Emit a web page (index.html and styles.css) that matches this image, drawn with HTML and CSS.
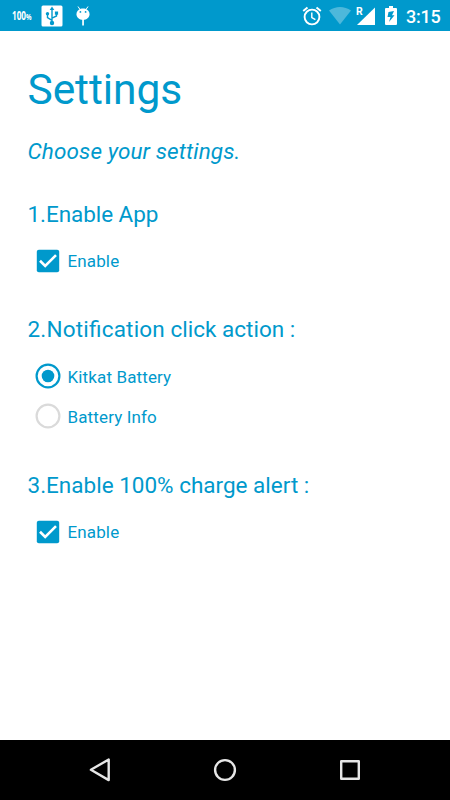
FILE: index.html
```html
<!DOCTYPE html>
<html lang="en">
<head>
<meta charset="utf-8">
<title>Settings</title>
<link rel="stylesheet" href="styles.css">
</head>
<body>
<div class="screen">
  <header class="status">
    <span class="percent">100<small>%</small></span>
    <svg class="usb" width="22" height="22" viewBox="0 0 22 22">
      <rect x=".5" y=".5" width="21" height="21" rx="1.5" fill="#fff"/>
      <g fill="none" stroke="#0099cc" stroke-width="1.4"><path d="M11 18V4M11 15.3L6.500 12.600V9M11 13.200L15.500 11V8"/></g>
      <g fill="#0099cc"><path d="M11 1.500L13.300 5H8.700z"/><circle cx="11" cy="18" r="2.200"/><circle cx="6.500" cy="8.700" r="1.700"/><path d="M13.900 6.500h3.200v3.200h-3.200z"/></g>
    </svg>
    <svg class="droid" width="14" height="22" viewBox="0 0 14 22">
      <path d="M2 1.500L4 4.500M12 1.500L10 4.500" stroke="#fff"/>
      <path d="M.5 9.200C.5 1.700 13.500 1.700 13.500 9.200 13.500 12.500 10.500 14.800 7 14.800S.5 12.500 .5 9.200z" fill="#fff"/>
      <path d="M6.200 14h1.700v6.500H6.200z" fill="#fff"/>
      <circle cx="4.400" cy="6.900" r=".9" fill="#0099cc"/><circle cx="9.600" cy="6.900" r=".9" fill="#0099cc"/>
    </svg>
    <span class="spacer"></span>
    <svg class="alarm" width="20" height="20" viewBox="0 0 20 20" fill="none" stroke="#fff" stroke-width="1.900">
      <circle cx="10" cy="11" r="7.400"/><path d="M1.200 5L5.500 1.400M18.800 5L14.500 1.400"/><path d="M9.800 6.500v5l3.600 2.200" stroke-width="1.400"/>
    </svg>
    <svg class="wifi" width="22" height="18" viewBox="0 0 22 18"><path d="M0 3.600C6.500-1.200 15.500-1.200 22 3.600L11 17.500z" fill="#4db8db"/></svg>
    <svg class="signal" width="20" height="20" viewBox="0 0 20 20"><path d="M19 1.500V19H1z" fill="#fff"/><path d="M0 0h6v9H0z" fill="#0099cc"/><text x="0" y="9" class="roaming">R</text></svg>
    <svg class="battery" width="12" height="19" viewBox="0 0 12 19"><path d="M4 0h4v2h3q1 0 1 1v15q0 1-1 1H1q-1 0-1-1V3q0-1 1-1h3z" fill="#fff"/><path d="M9 5L3.500 6 2.500 11h3L4 16 9.500 9.300H7z" fill="#0099cc"/></svg>
    <span class="clock">3:15</span>
  </header>

  <main class="content">
    <h1>Settings</h1>
    <p class="intro">Choose your settings.</p>

    <section>
      <h2 class="h-app">1.Enable App</h2>
      <div class="option">
        <svg class="control" width="26" height="26" viewBox="0 0 26 26"><rect x="1.800" y="1.800" width="22.400" height="22.400" rx="2" fill="#0099cc"/><path d="M5 12.800l5.200 5.100L21 7.100" fill="none" stroke="#fff" stroke-width="2.600"/></svg>
        <span>Enable</span>
      </div>
    </section>

    <section>
      <h2 class="h-click"><span>2.Notification</span> click action :</h2>
      <div class="option">
        <svg class="control" width="26" height="26" viewBox="0 0 26 26"><circle cx="13" cy="13" r="11.400" fill="none" stroke="#0099cc" stroke-width="2.200"/><circle cx="13" cy="13" r="6.300" fill="#0099cc"/></svg>
        <span>Kitkat Battery</span>
      </div>
      <div class="option">
        <svg class="control" width="26" height="26" viewBox="0 0 26 26"><circle cx="13" cy="13" r="11.400" fill="none" stroke="#dadada" stroke-width="2.200"/></svg>
        <span>Battery Info</span>
      </div>
    </section>

    <section>
      <h2 class="h-alert">3.Enable 100% charge alert :</h2>
      <div class="option">
        <svg class="control" width="26" height="26" viewBox="0 0 26 26"><rect x="1.800" y="1.800" width="22.400" height="22.400" rx="2" fill="#0099cc"/><path d="M5 12.800l5.200 5.100L21 7.100" fill="none" stroke="#fff" stroke-width="2.600"/></svg>
        <span>Enable</span>
      </div>
    </section>
  </main>

  <nav class="nav">
    <svg width="24" height="26" viewBox="0 0 24 26"><path d="M20.700 2.500v20.600L2.900 12.800z"/></svg>
    <svg width="24" height="24" viewBox="0 0 24 24"><circle cx="12" cy="12" r="9.900"/></svg>
    <svg width="24" height="24" viewBox="0 0 24 24"><rect x="3.200" y="3.200" width="17.600" height="17.600"/></svg>
  </nav>
</div>
</body>
</html>
```

FILE: styles.css
```css
* { box-sizing: border-box; }
body { margin: 0; font-family: Roboto, sans-serif; color: #0099cc; background: #fff; }
svg { display: block; flex: none; }
.screen { width: 450px; height: 800px; display: flex; flex-direction: column; overflow: hidden; }

.status { height: 31px; background: #0099cc; display: flex; align-items: center; padding: 0 10px 0 12px; color: #fff; flex: none; }
.percent { width: 29px; font-family: "Open Sans", sans-serif; font-size: 12px; font-weight: 700; line-height: 14px; transform: scaleX(.68); transform-origin: left; margin-top: 2px; white-space: nowrap; }
.percent small { font-size: 9px; }
.usb { margin-right: 13px; }
.spacer { flex: 1; }
.alarm { margin-right: 7px; }
.wifi { margin-right: 5px; }
.signal { margin-right: 9px; }
.battery { margin-right: 9px; }
.roaming { font: 700 10.500px Roboto, sans-serif; fill: #fff; }
.clock { font-size: 18px; font-weight: 500; line-height: 22px; letter-spacing: -.25px; margin-top: 2px; width: 34px; white-space: nowrap; }

.content { flex: 1; padding: 34px 28px 0 27.500px; }
h1 { margin: 0; font-size: 42.500px; font-weight: 400; line-height: 50px; letter-spacing: -.08px; }
.intro { margin: 21px 0 33px; font-size: 22.500px; font-style: italic; line-height: 30px; letter-spacing: .1px; }
section { margin-bottom: 33.500px; }
h2 { margin: 0 0 12px; font-size: 22.500px; font-weight: 400; line-height: 30px; }
.h-app { letter-spacing: -.07px; }
.h-click { margin: -1px 0 13px; }
.h-click span { letter-spacing: .2px; font-feature-settings: "liga" 1; }
.option { height: 40px; display: flex; align-items: center; padding-left: 7px; font-size: 17px; letter-spacing: .13px; }
.control { margin: -1px 7px 0 0; }

.nav { height: 60px; background: #000; display: flex; align-items: center; justify-content: space-between; padding: 0 88px; flex: none; }
.nav svg { fill: none; stroke: #e6e6e6; stroke-width: 2.400; stroke-linejoin: round; }
```
